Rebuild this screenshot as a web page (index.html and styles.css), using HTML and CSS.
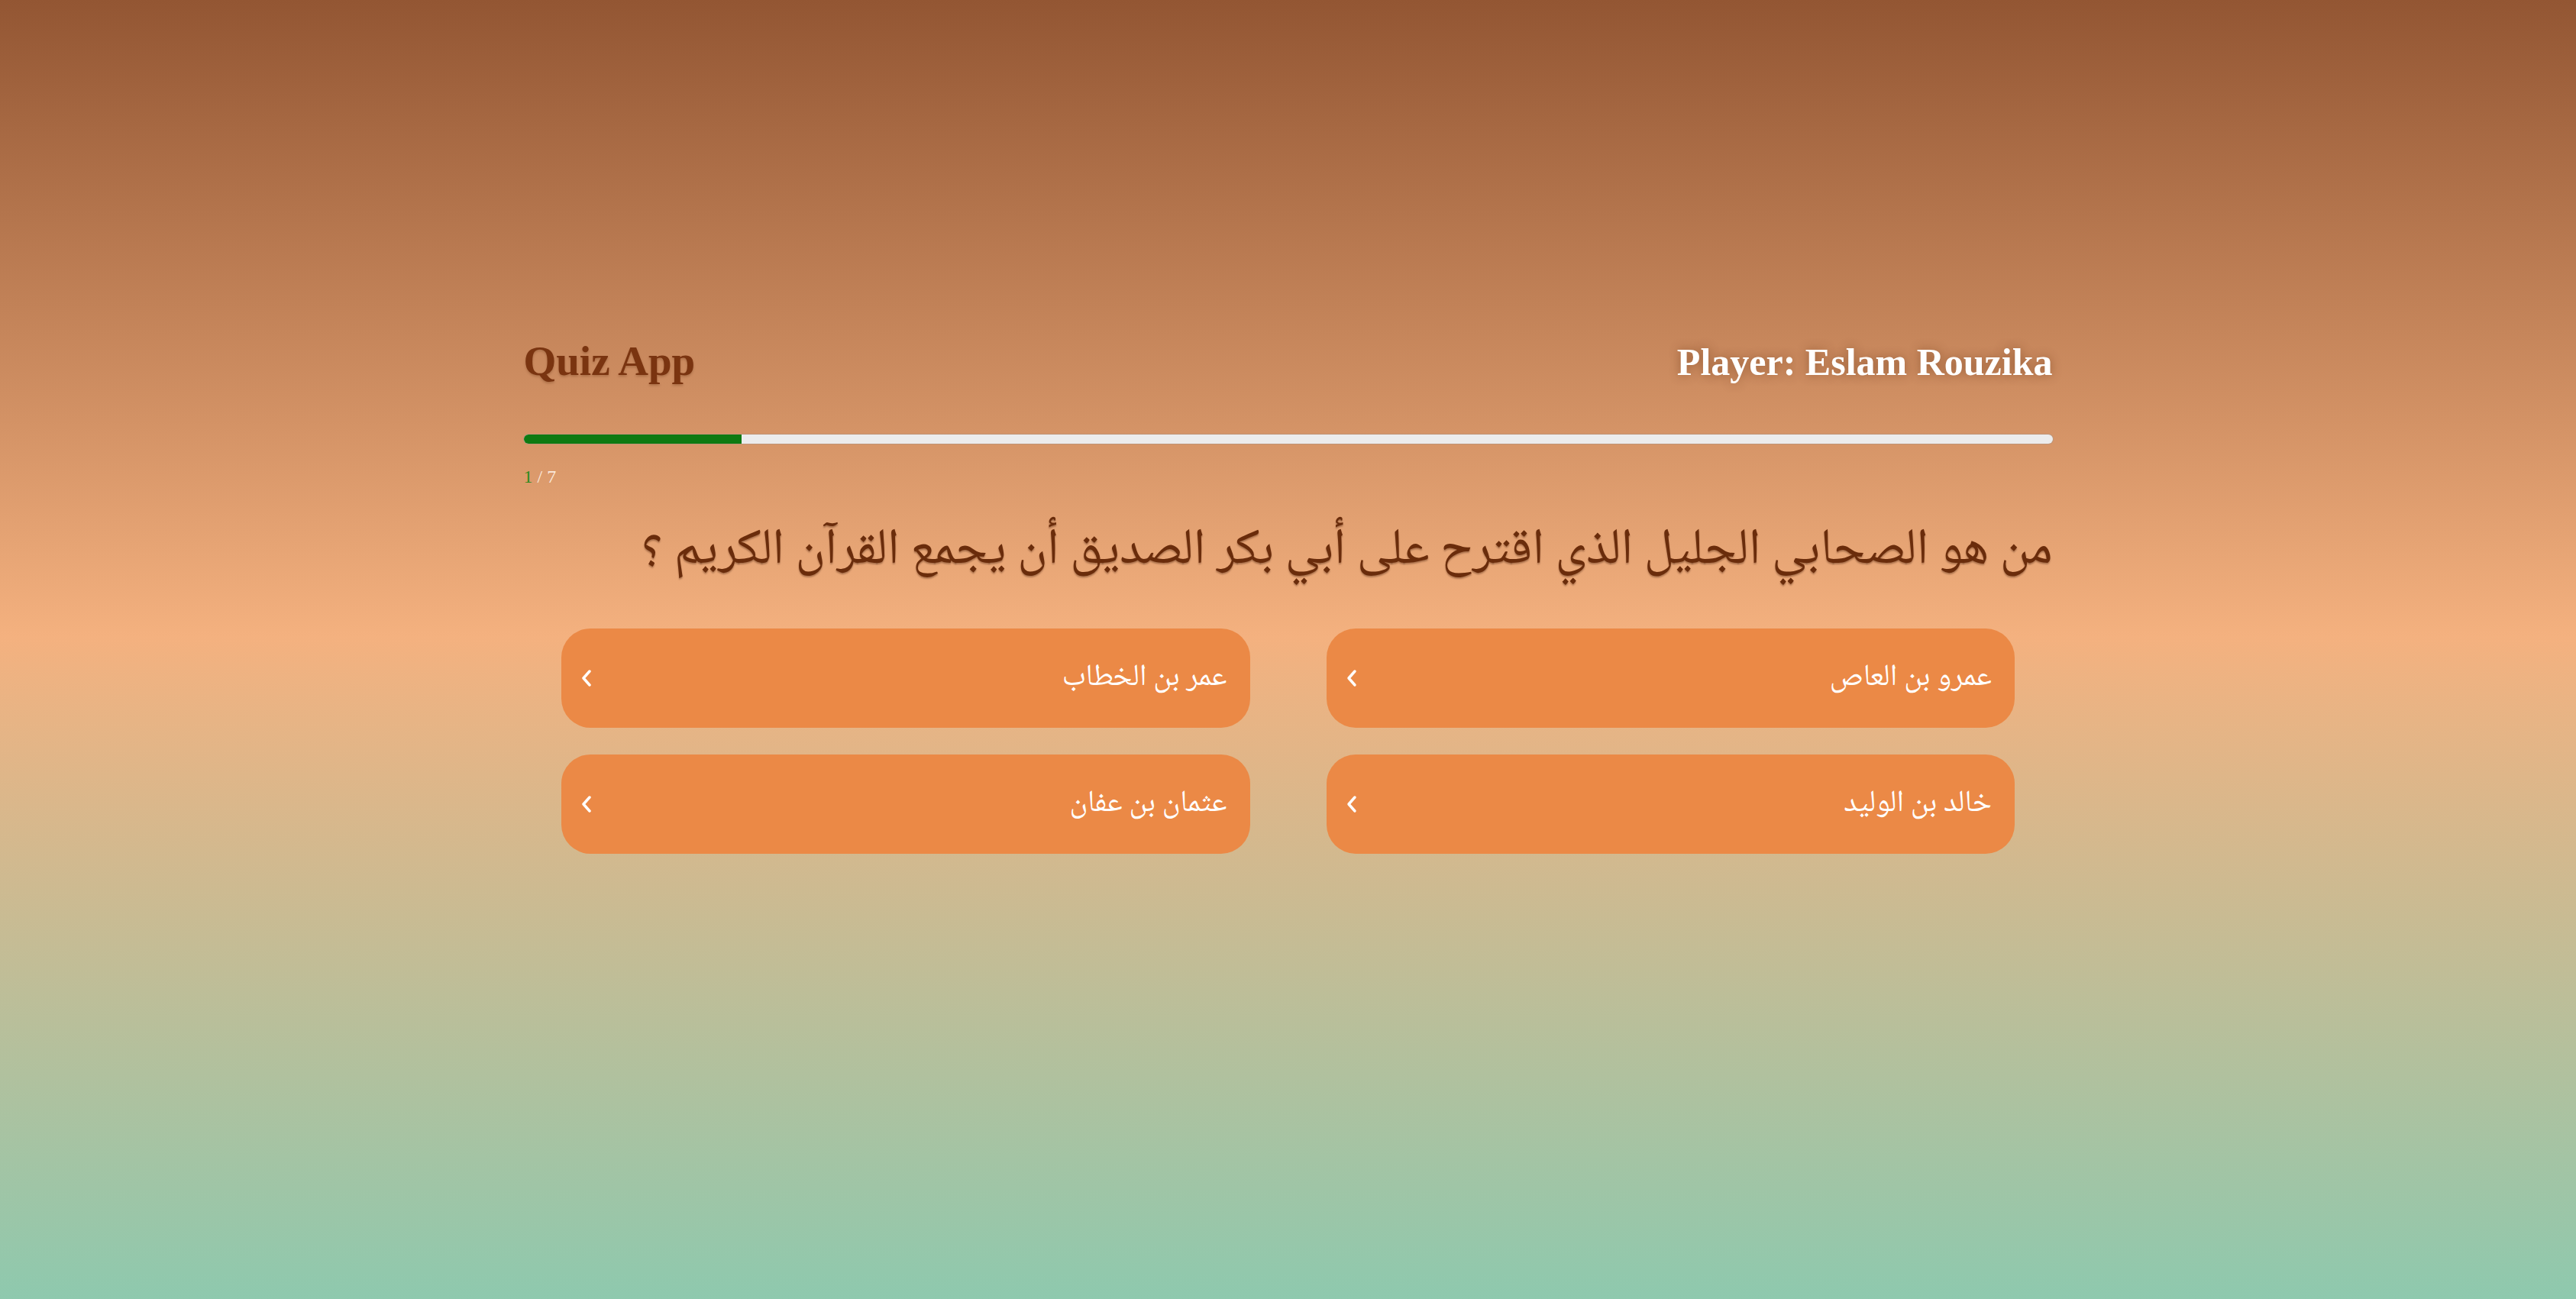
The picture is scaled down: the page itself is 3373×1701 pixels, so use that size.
FILE: index.html
```html
<!DOCTYPE html>
<html lang="ar">
<head>
<meta charset="utf-8">
<title>Quiz App</title>
<link rel="stylesheet" href="styles.css">
</head>
<body>
<div class="app">
  <header class="top">
    <h1 class="brand">Quiz App</h1>
    <div class="player">Player: Eslam Rouzika</div>
  </header>
  <div class="progress"><div class="progress-fill" style="width: 14.2857%"></div></div>
  <div class="counter"><span class="current">1</span> / 7</div>
  <h2 class="question" dir="rtl">من هو الصحابي الجليل الذي اقترح على أبي بكر الصديق أن يجمع القرآن الكريم ؟</h2>
  <div class="answers" dir="rtl">
    <button class="answer"><span class="answer-text">عمرو بن العاص</span><svg class="chev" viewBox="0 0 14 24" width="14" height="24"><polyline points="11,3 3,12 11,21"/></svg></button>
    <button class="answer"><span class="answer-text">عمر بن الخطاب</span><svg class="chev" viewBox="0 0 14 24" width="14" height="24"><polyline points="11,3 3,12 11,21"/></svg></button>
    <button class="answer"><span class="answer-text">خالد بن الوليد</span><svg class="chev" viewBox="0 0 14 24" width="14" height="24"><polyline points="11,3 3,12 11,21"/></svg></button>
    <button class="answer"><span class="answer-text">عثمان بن عفان</span><svg class="chev" viewBox="0 0 14 24" width="14" height="24"><polyline points="11,3 3,12 11,21"/></svg></button>
  </div>
</div>
</body>
</html>
```

FILE: styles.css
```css
html, body {
  margin: 0;
  padding: 0;
}
body {
  min-height: 100vh;
  background: linear-gradient(180deg, #935633 0%, #f4b17f 49%, #8ec9ae 100%);
  font-family: "Liberation Serif", "DejaVu Serif", serif;
}
.app {
  width: 2002px;
  margin: 0 auto;
  padding-top: 440px;
}
.top {
  display: flex;
  justify-content: space-between;
  align-items: baseline;
  height: 66px;
}
.brand {
  margin: 0;
  font-size: 55px;
  line-height: 66px;
  font-weight: bold;
  color: #7a3410;
  text-shadow: 0 2px 3px rgba(80, 30, 0, 0.25);
}
.player {
  font-size: 50px;
  line-height: 66px;
  font-weight: bold;
  color: #ffffff;
  text-shadow: 0 0 14px rgba(90, 40, 10, 0.45);
}
.progress {
  margin-top: 63px;
  height: 12px;
  border-radius: 6px;
  background: #ececec;
  box-shadow: 0 0 0 1px rgba(150, 150, 150, 0.35);
  overflow: hidden;
}
.progress-fill {
  height: 100%;
  background: #0e7a12;
}
.counter {
  margin-top: 30px;
  font-size: 24px;
  line-height: 26px;
  color: #fbe9dc;
}
.current {
  color: #2f8a1e;
}
.question {
  margin: 36px 0 0;
  text-align: right;
  font-family: "Noto Naskh Arabic", "Amiri", "Noto Sans Arabic", "DejaVu Serif", "DejaVu Sans", serif;
  font-weight: normal;
  font-size: 66px;
  line-height: 100px;
  color: #6a2c0b;
  text-shadow: 0 2px 2px rgba(60, 20, 0, 0.35);
}
.answers {
  width: 1903px;
  margin: 50px auto 0;
  display: grid;
  grid-template-columns: 1fr 1fr;
  column-gap: 100px;
  row-gap: 35px;
}
.answer {
  display: flex;
  justify-content: space-between;
  align-items: center;
  height: 130px;
  padding: 0 30px 0 26px;
  border: none;
  border-radius: 38px;
  background: #eb8946;
  color: #ffffff;
  font-family: "Noto Naskh Arabic", "Amiri", "Noto Sans Arabic", "DejaVu Serif", "DejaVu Sans", serif;
  font-size: 40px;
  cursor: pointer;
}
.chev {
  display: block;
  fill: none;
  stroke: #ffffff;
  stroke-width: 3.5;
  stroke-linecap: round;
  stroke-linejoin: round;
}
```
